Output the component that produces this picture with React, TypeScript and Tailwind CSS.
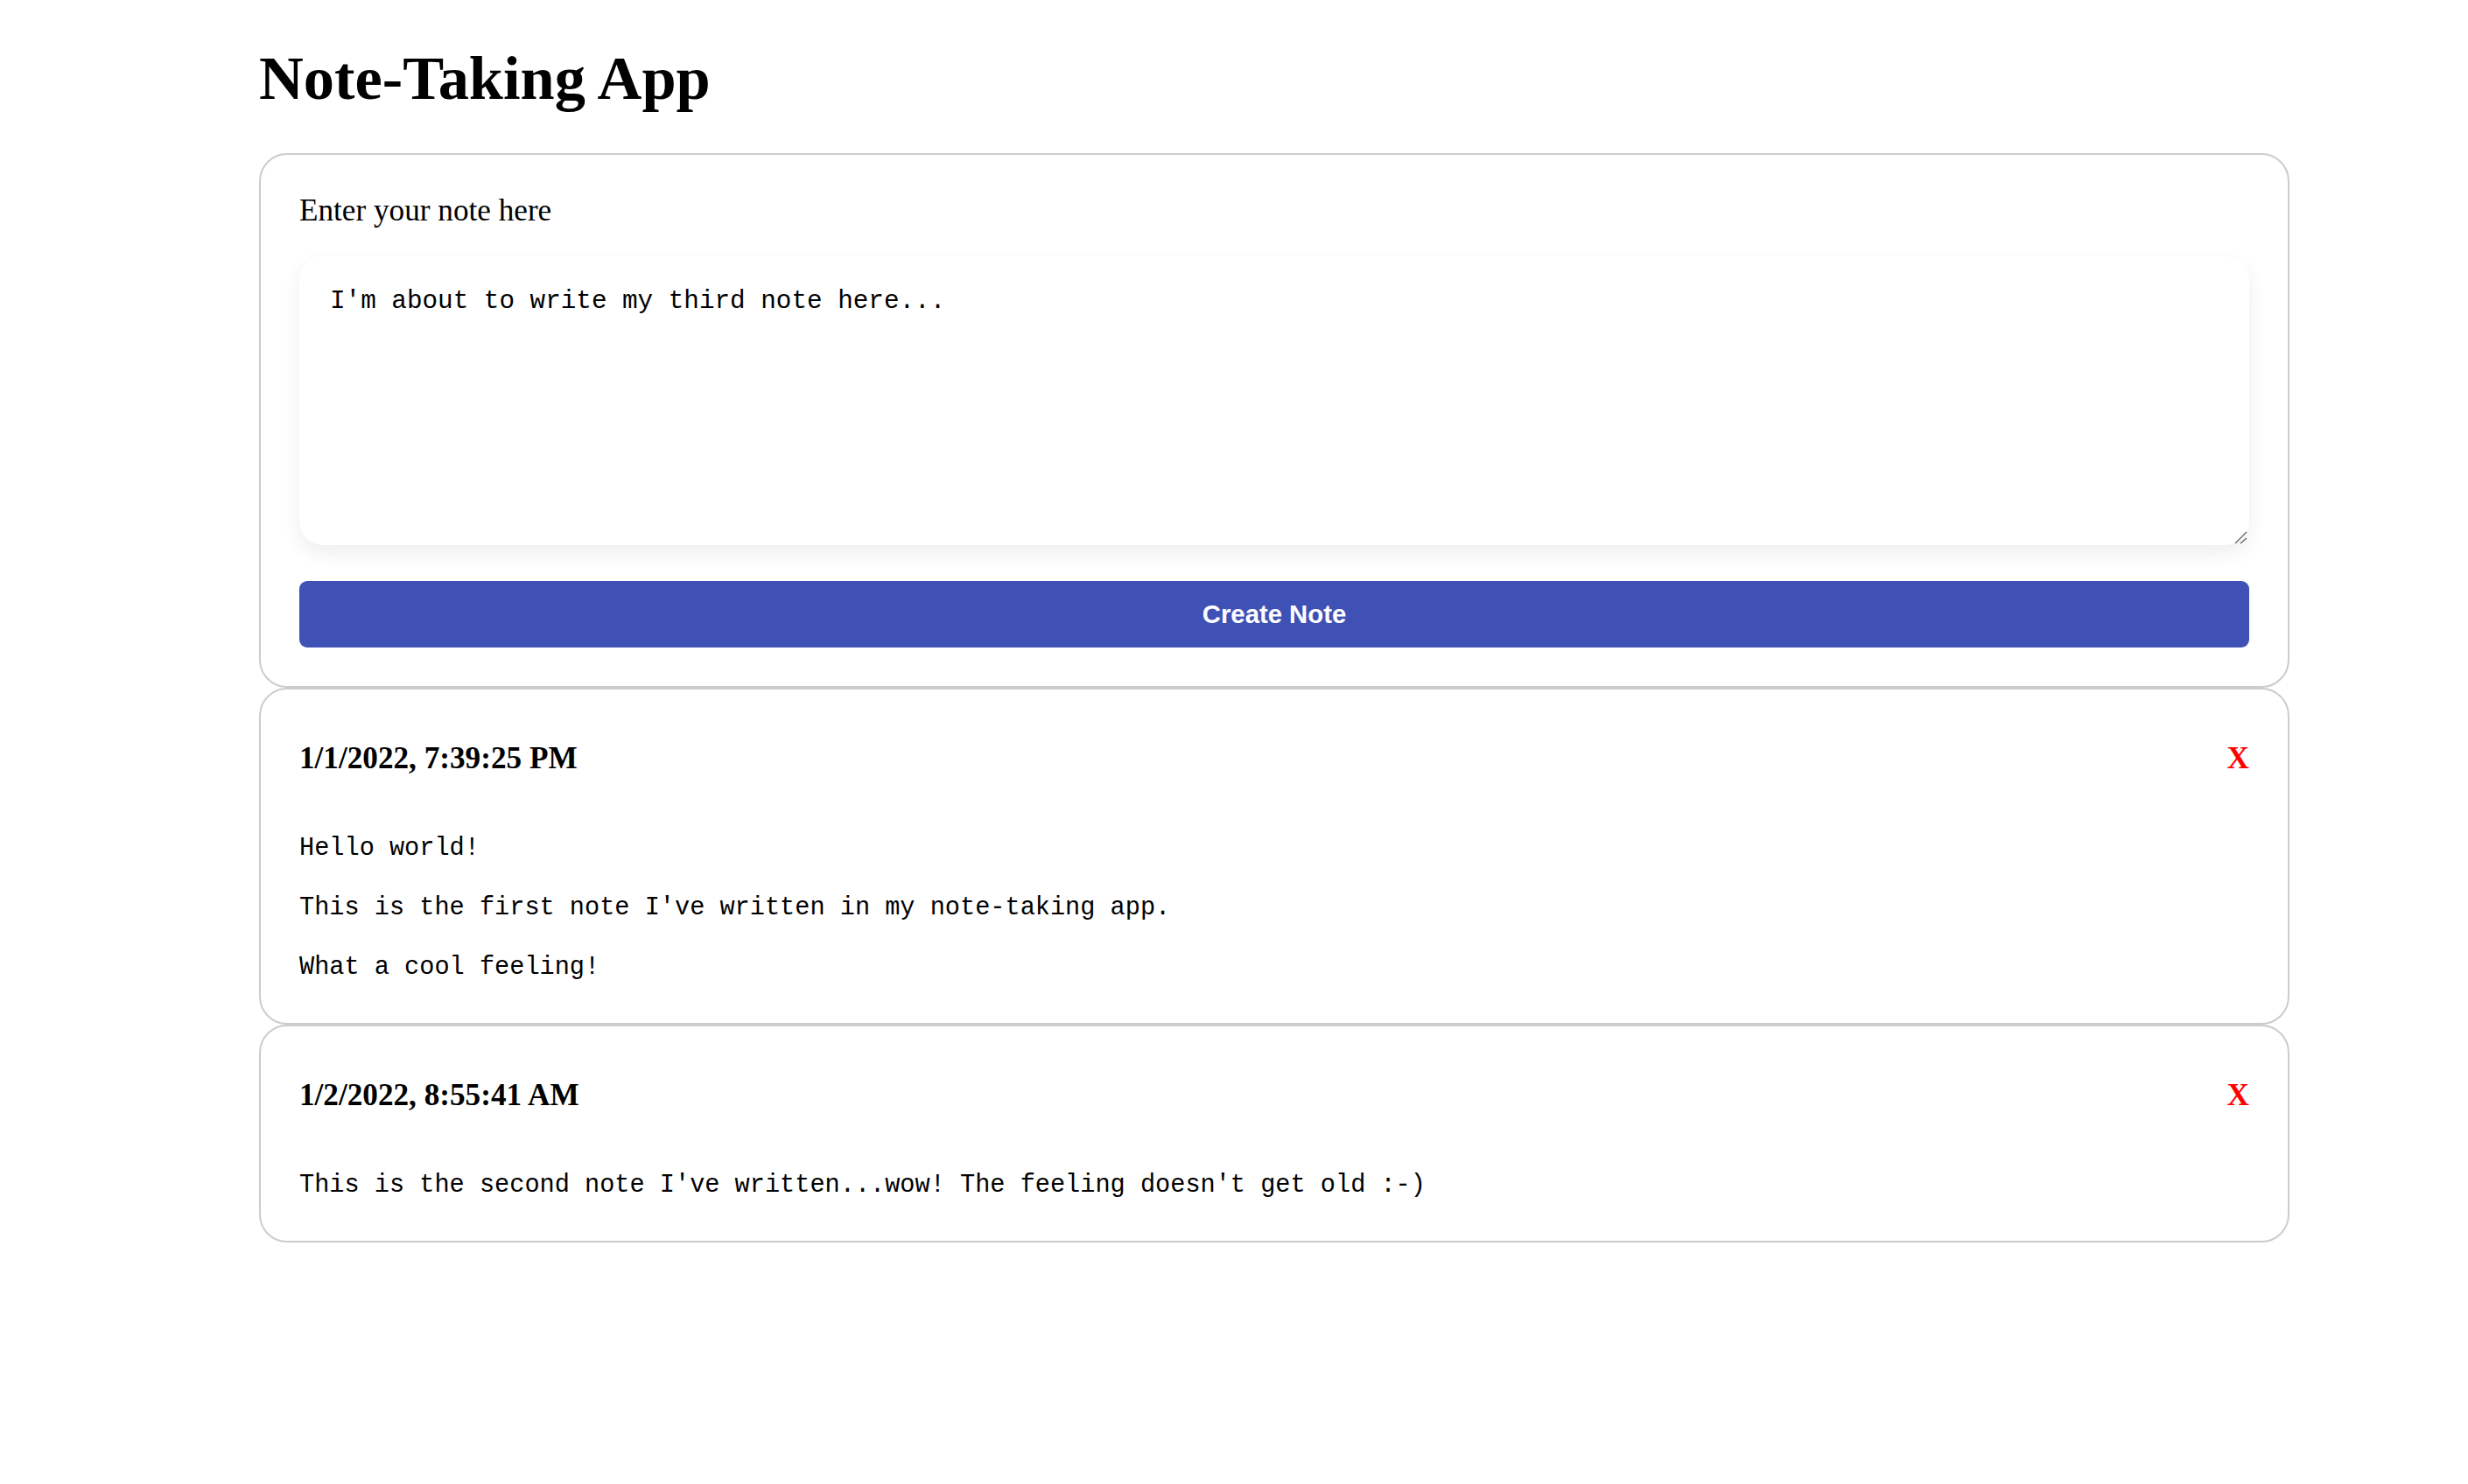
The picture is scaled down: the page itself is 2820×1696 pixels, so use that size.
const notes = [
  {
    date: "1/1/2022, 7:39:25 PM",
    body: "Hello world!\n\nThis is the first note I've written in my note-taking app.\n\nWhat a cool feeling!",
  },
  {
    date: "1/2/2022, 8:55:41 AM",
    body: "This is the second note I've written...wow! The feeling doesn't get old :-)",
  },
];

function NoteCard({ date, body }: { date: string; body: string }) {
  return (
    <div className="rounded-[32px] border-2 border-[#cccccc] px-[44px] pt-[59px] pb-[46px]">
      <div className="flex h-[40px] items-center justify-between">
        <span className="text-[35.2px] leading-[40px] font-bold">{date}</span>
        <button className="text-[35.2px] leading-[40px] font-bold text-[#ff0000]">X</button>
      </div>
      <pre className="mt-[66px] whitespace-pre-wrap font-['Liberation_Mono',monospace] text-[28.6px] leading-[34px] text-black">
        {body}
      </pre>
    </div>
  );
}

export default function App() {
  return (
    <div className="min-h-screen bg-white font-['Liberation_Serif','Times_New_Roman',serif] text-black">
      <div className="ml-[296px] w-[2320px] pt-[49px]">
        <h1 className="text-[70.4px] leading-[80px] font-bold">Note-Taking App</h1>

        <div className="mt-[46px] rounded-[32px] border-2 border-[#cccccc] px-[44px] pt-[44px] pb-[44px]">
          <label className="block text-[35.2px] leading-[40px]">Enter your note here</label>
          <div className="relative mt-[32px]">
            <textarea
              className="block h-[330px] w-full resize-none rounded-[27px] bg-white p-[35px] font-['Liberation_Mono',monospace] text-[29.3px] leading-[34px] text-black shadow-[0_9px_22px_rgba(0,0,0,0.07)] outline-none"
              defaultValue="I'm about to write my third note here..."
            />
            <svg
              className="absolute right-[2px] bottom-[1px]"
              width="15"
              height="15"
              viewBox="0 0 15 15"
            >
              <path d="M14 1 L1 14 M14 8 L7 14" stroke="#666" strokeWidth="1.3" fill="none" />
            </svg>
          </div>
          <button className="mt-[41px] block h-[76px] w-full rounded-[9px] bg-[#3f51b5] font-['Liberation_Sans',Arial,sans-serif] text-[29.3px] font-bold text-white">
            Create Note
          </button>
        </div>

        {notes.map((n) => (
          <NoteCard key={n.date} date={n.date} body={n.body} />
        ))}
      </div>
    </div>
  );
}
